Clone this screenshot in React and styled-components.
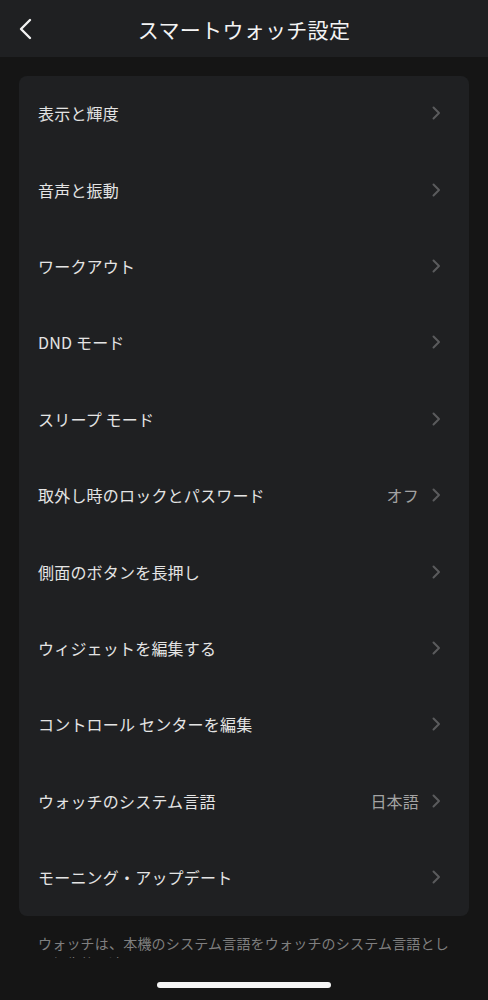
import React from "react";
import styled, { createGlobalStyle } from "styled-components";

const Global = createGlobalStyle`
  html, body { margin: 0; padding: 0; background: #151515; }
  body { font-family: "Noto Sans CJK JP", "Noto Sans", sans-serif; }
  * { box-sizing: border-box; }
`;

const Page = styled.div`
  width: 488px;
  height: 1000px;
  overflow: hidden;
  position: relative;
  background: #151515;
`;

const Header = styled.header`
  height: 57px;
  background: #1f2022;
  display: grid;
  grid-template-columns: 57px 1fr 57px;
  align-items: center;
`;

const BackButton = styled.button`
  background: none;
  border: none;
  padding: 0 0 0 18px;
  height: 57px;
  display: flex;
  align-items: center;
  color: #f2f2f2;
  cursor: pointer;
`;

const Title = styled.h1`
  margin: 0;
  text-align: center;
  font-size: 21px;
  font-weight: 400;
  color: #f4f4f4;
  letter-spacing: 0.3px;
`;

const Content = styled.main`
  padding: 19px 19px 0 19px;
`;

const Card = styled.section`
  background: #1f2022;
  border-radius: 8px;
  display: flex;
  flex-direction: column;
`;

const Row = styled.div`
  height: 76.4px;
  display: flex;
  align-items: center;
  padding: 0 28px 2px 19px;
  gap: 12px;
`;

const Label = styled.span`
  flex: 1;
  font-size: 16px;
  color: #e4e4e4;
  letter-spacing: 0.2px;
`;

const Value = styled.span`
  font-size: 16px;
  color: #a3a3a3;
  letter-spacing: 0.2px;
`;

const Note = styled.p`
  margin: 17px 0 0 0;
  padding: 0 38px;
  font-size: 14px;
  line-height: 20px;
  color: #7f7f7f;
  letter-spacing: 0.2px;
`;

const BottomBar = styled.div`
  position: absolute;
  left: 0;
  right: 0;
  bottom: 0;
  height: 42px;
  background: #151515;
  display: flex;
  justify-content: center;
  padding-top: 24px;
`;

const HomeIndicator = styled.div`
  width: 174px;
  height: 6px;
  border-radius: 3px;
  background: #f4f4f4;
`;

const Chevron = () => (
  <svg width="10" height="14" viewBox="0 0 10 14" fill="none">
    <path d="M2.5 1.5L8 7L2.5 12.5" stroke="#5a5b5d" strokeWidth="2" strokeLinecap="round" strokeLinejoin="round" />
  </svg>
);

const BackIcon = () => (
  <svg width="16" height="22" viewBox="0 0 16 22" fill="none">
    <path d="M12 2L3 11L12 20" stroke="#f2f2f2" strokeWidth="2.4" strokeLinecap="round" strokeLinejoin="round" />
  </svg>
);

const items = [
  { label: "表示と輝度" },
  { label: "音声と振動" },
  { label: "ワークアウト" },
  { label: "DND モード" },
  { label: "スリープ モード" },
  { label: "取外し時のロックとパスワード", value: "オフ" },
  { label: "側面のボタンを長押し" },
  { label: "ウィジェットを編集する" },
  { label: "コントロール センターを編集" },
  { label: "ウォッチのシステム言語", value: "日本語" },
  { label: "モーニング・アップデート" },
];

export default function App() {
  return (
    <Page>
      <Global />
      <Header>
        <BackButton aria-label="戻る">
          <BackIcon />
        </BackButton>
        <Title>スマートウォッチ設定</Title>
        <span />
      </Header>
      <Content>
        <Card>
          {items.map((it) => (
            <Row key={it.label}>
              <Label>{it.label}</Label>
              {it.value && <Value>{it.value}</Value>}
              <Chevron />
            </Row>
          ))}
        </Card>
      </Content>
      <Note>
        ウォッチは、本機のシステム言語をウォッチのシステム言語として優先的に適用します。
      </Note>
      <BottomBar>
        <HomeIndicator />
      </BottomBar>
    </Page>
  );
}
